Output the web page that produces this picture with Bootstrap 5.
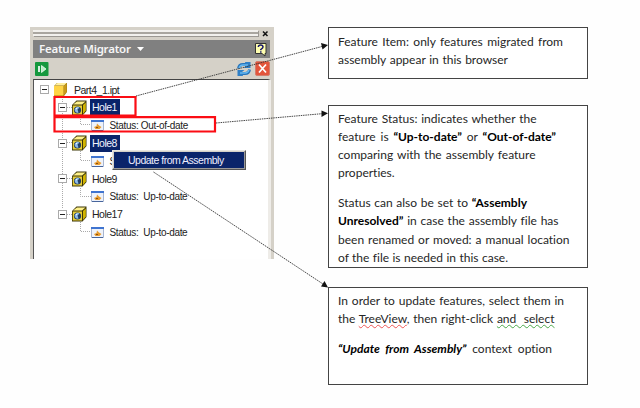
<!DOCTYPE html>
<html lang="en">
<head>
<meta charset="utf-8">
<meta name="viewport" content="width=device-width, initial-scale=1">
<title>Feature Migrator</title>
<link href="https://cdn.jsdelivr.net/npm/bootstrap@5.3.0/dist/css/bootstrap.min.css" rel="stylesheet">
<style>
body{width:640px;height:408px;background:#fefefe;font-family:"Liberation Sans",Arial,sans-serif;color:#222}
.stage{padding:27px 0 0 30px;height:408px}
.browser{width:243.5px;height:232px;background:#d5d1c8;padding:3px 4px 0 3px}
.grip{width:225px;height:6px;border-top:2px solid #f2f1ee;border-bottom:2px solid #f2f1ee;background:#a9a6a0;box-shadow:1px 1px 0 #9b9893}
.gripbar{height:10px}
.titlebar{height:18px;background:#808080;color:#f6f6f6;padding:0 3px 0 6px;font:600 11.5px/18px "Noto Sans",sans-serif;letter-spacing:-.24px}
.toolbar{height:21px;padding:0 0 0 2px}
.tree{height:180px;background:#fff;border-top:1px solid #444;border-left:1px solid #555;padding-top:1px;margin-right:-1px;border-right:3px solid #eeece8}
.tree-row{height:17.8px;font-size:10.5px;line-height:17px;white-space:pre}
.lvl0{padding-left:6px}
.lvl1{padding-left:24px}
.lvl2{padding-left:57px}
.twig{width:9px;height:9px;flex:none;border:1px solid #aaa;background:#fff;position:relative;z-index:1}
.twig::after{content:"";display:block;width:5px;height:1px;margin:3px 1px;background:#222}
.cube-gap{margin-left:5px;margin-right:3px}
.t-name{display:block;height:16.5px;padding:0 2px;letter-spacing:-.5px}
.t-file{padding-left:4px;letter-spacing:-.5px}
.t-picked{background:#0a246a;color:#f2f4ff;width:30px}
.t-stat{font-size:10px;letter-spacing:-.32px;padding-left:1.5px}
.callout{width:260px;border:1px solid #444;background:#fff;color:#262626;padding-left:9px;font-family:Lato,sans-serif;font-size:12px;line-height:18.1px;font-variant-ligatures:none}
.callout b{color:#000}
.c1{height:52px;padding-top:5px;line-height:17.7px}
.c2{height:162.5px;margin-top:26px;padding-top:4px}
.c3{height:98px;margin-top:19.5px;padding-top:4px}
.ln{display:block;white-space:nowrap;text-align-last:justify}
.gap-above{margin-top:12px}
.c1 .ln:nth-child(1){width:225px}.c1 .ln:nth-child(2){width:170px}
.c2 .ln:nth-child(1){width:198.5px}.c2 .ln:nth-child(2){width:218px}.c2 .ln:nth-child(3){width:197.5px}.c2 .ln:nth-child(4){width:57px}
.c2 .ln:nth-child(5){width:189px}.c2 .ln:nth-child(6){width:220.5px}.c2 .ln:nth-child(7){width:231.5px}.c2 .ln:nth-child(8){width:170px}
.c3 .ln:nth-child(1){width:226px}.c3 .ln:nth-child(2){width:216.5px}.c3 .ln:nth-child(3){width:214px}
.notes{margin-left:54.5px}
.spell{text-decoration:underline wavy #e55 .5px;text-underline-offset:1px}
.grammar{text-decoration:underline wavy #4aa84a .5px;text-underline-offset:1px}
.overlay{position:absolute;left:0;top:0;pointer-events:none}
.ctx{position:absolute;left:112px;top:150px;width:134px;height:20px;background:#d4d0c8;border:1px solid #e8e6e0;border-right-color:#555;border-bottom-color:#555;padding:1px;box-shadow:inset -1px -1px 0 #999;z-index:2}
.ctx-item{height:16px;background:#0a246a;color:#eef;font-size:10.5px;line-height:16px;padding-left:14px;white-space:nowrap;letter-spacing:-.5px}
.marks{z-index:3}
</style>
<script src="https://cdn.jsdelivr.net/npm/bootstrap@5.3.0/dist/js/bootstrap.bundle.min.js"></script>
</head>
<body class="position-relative overflow-hidden m-0">
<svg class="d-none">
  <symbol id="cube" viewBox="0 0 15 16">
    <path d="M0 5 4.500 .5H14.500V11L10.500 15.500H0Z" fill="#3c3606"/><path d="M1 4.500 5 1.500H13.500L10 4.500Z" fill="#fff18a"/><path d="M11 5 13.800 2.500V10.500L11 14Z" fill="#d2b500"/><path d="M.8 5.500H10V14.500H.8Z" fill="#e8cf38"/>
    <circle cx="5.500" cy="10" r="3.600" fill="#233e63"/><path d="M2.500 9.500Q4.500 5.500 7.500 7.500L5.500 9.500 6.500 12.500Q3.500 13.500 2.500 9.500Z" fill="#8dbce8"/><path d="M3.500 8.500 5.500 7.500 4.500 9.500Z" fill="#fff"/>
  </symbol>
  <symbol id="stat" viewBox="0 0 13 11">
    <path d="M.5.5H12.500V10.500H.5Z" fill="#eef2fa" stroke="#a8b6d0"/><path d="M0 0H13V2H0Z" fill="#3f74d0"/><path d="M12 2V11H1V10H12Z" fill="#47659c"/><path d="M3 7 5.500 6 6 3.500 8 5.500 10.500 7 8.500 9H4.500Z" fill="#e79b2c"/><path d="M5 7H7V8H5Z" fill="#8c4e10"/>
  </symbol>
</svg>
<main class="stage d-flex">
  <section class="browser">
    <div class="gripbar d-flex justify-content-between">
      <div class="grip"></div>
      <svg width="9" height="8" viewBox="0 0 9 8"><path d="M2 1.500 6.500 6M6.500 1.500 2 6" stroke="#111" stroke-width="1.500"/></svg>
    </div>
    <div class="titlebar d-flex align-items-center justify-content-between">
      <span>Feature Migrator <svg class="ms-1" width="8" height="5" viewBox="0 0 8 5"><path d="M0 0H7L3.500 4Z" fill="#fff"/></svg></span>
      <svg width="12" height="15" viewBox="0 0 12 15"><path d="M.5 1.500H11V11.500H10V14L7 11.500H.5Z" fill="#ffffb0" stroke="#333"/><path d="M3.300 5Q3.500 3 5.700 3T8 5Q8 6 5.800 7.500V8.300M5.800 9.300V10.800" fill="none" stroke="#16166c" stroke-width="1.500"/></svg>
    </div>
    <div class="toolbar d-flex align-items-center justify-content-between">
      <svg width="14" height="14" viewBox="0 0 14 14"><rect width="13.500" height="14" rx="1" fill="#16983d"/><path d="M4 4V10" stroke="#fff" stroke-width="1.700"/><path d="M6.500 3.500 11 7 6.500 10.500Z" fill="#b8efc3" stroke="#fff" stroke-width=".7"/></svg>
      <span class="d-flex align-items-center me-n1">
        <svg width="14" height="14" viewBox="0 0 14 14"><path d="M1.500 6.500Q2 2.500 6 2.500H9M12.500 7.500Q12 11.500 8 11.500H5" fill="none" stroke="#2875bb" stroke-width="2.900"/><path d="M8 0 13.500 0V6H6.500L9 4ZM6 14 .5 14V8H7.500L5 10Z" fill="#2f7fc6"/><path d="M2 6Q3 3 6 3H11M12 8Q11 11 8 11H3" fill="none" stroke="#65b9f2" stroke-width="1.300"/></svg>
        <svg class="ms-1" width="15" height="15" viewBox="0 0 15 15"><rect x=".5" y=".5" width="14" height="14" rx="1.500" fill="#e3553b" stroke="#d37d6c"/><path d="M4 3.500 11 11.500M11 3.500 4 11.500" stroke="#fff" stroke-width="1.700"/></svg>
      </span>
    </div>
    <div class="tree">
      <div class="tree-row lvl0 d-flex align-items-center"><i class="twig"></i><svg class="ms-1" width="17" height="15" viewBox="2 0 17 15"><path d="M3 4 6 1H16V10L13 14H3Z" fill="#a27c12"/><path d="M3.500 3.500 6.500 1H15.500L13 3.500Z" fill="#fff0a0"/><path d="M13 4 15.500 1.500V10L13 13Z" fill="#c99a18"/><path d="M3 4H12.500V13.500H3Z" fill="#ffd445"/></svg><span class="t-name t-file">Part4_1.ipt</span></div>
      <div class="tree-row lvl1 d-flex align-items-center"><i class="twig"></i><svg class="cube-gap" width="15" height="16"><use href="#cube"/></svg><span class="t-name t-picked">Hole1</span></div>
      <div class="tree-row lvl2 d-flex align-items-center"><svg class="me-1" width="13" height="11"><use href="#stat"/></svg><span class="t-name t-stat">Status: Out-of-date</span></div>
      <div class="tree-row lvl1 d-flex align-items-center"><i class="twig"></i><svg class="cube-gap" width="15" height="16"><use href="#cube"/></svg><span class="t-name t-picked">Hole8</span></div>
      <div class="tree-row lvl2 d-flex align-items-center"><svg class="me-1" width="13" height="11"><use href="#stat"/></svg><span class="t-name t-stat">S</span></div>
      <div class="tree-row lvl1 d-flex align-items-center"><i class="twig"></i><svg class="cube-gap" width="15" height="16"><use href="#cube"/></svg><span class="t-name">Hole9</span></div>
      <div class="tree-row lvl2 d-flex align-items-center"><svg class="me-1" width="13" height="11"><use href="#stat"/></svg><span class="t-name t-stat">Status:  Up-to-date</span></div>
      <div class="tree-row lvl1 d-flex align-items-center"><i class="twig"></i><svg class="cube-gap" width="15" height="16"><use href="#cube"/></svg><span class="t-name">Hole17</span></div>
      <div class="tree-row lvl2 d-flex align-items-center"><svg class="me-1" width="13" height="11"><use href="#stat"/></svg><span class="t-name t-stat">Status:  Up-to-date</span></div>
    </div>
  </section>
  <section class="notes">
    <div class="callout c1"><span class="ln">Feature Item: only features migrated from</span><span class="ln">assembly appear in this browser</span></div>
    <div class="callout c2"><span class="ln">Feature Status: indicates whether the</span><span class="ln">feature is <b>“Up-to-date”</b> or <b>“Out-of-date”</b></span><span class="ln">comparing with the assembly feature</span><span class="ln">properties.</span><span class="ln gap-above">Status can also be set to <b>“Assembly</b></span><span class="ln"><b>Unresolved”</b> in case the assembly file has</span><span class="ln">been renamed or moved: a manual location</span><span class="ln">of the file is needed in this case.</span></div>
    <div class="callout c3"><span class="ln">In order to update features, select them in</span><span class="ln">the <span class="spell">TreeView</span>, then right-click <span class="grammar">and&nbsp; select</span></span><span class="ln gap-above"><b><i>“Update from Assembly”</i></b> context option</span></div>
  </section>
</main>
<svg class="overlay" width="640" height="408" fill="none" stroke="#aaa" stroke-dasharray="1 1"><path d="M62.500 97V209M67 107.500H72M67 142.500H72M67 178.500H72M67 214.500H72M80.500 115V124.500H91M80.500 151V160.500H91M80.500 186V196.500H91M80.500 222V231.500H91"/></svg>
<div class="ctx"><div class="ctx-item">Update from Assembly</div></div>
<svg class="overlay marks" width="640" height="408" fill="none"><path d="M54.500 97H135.500V115.500H54.500ZM54.500 117.200H215V131.500H54.500Z" stroke="#fb0d14" stroke-width="2.200"/><path d="M136 96 322 46.500M216 123 322 113.700M153.500 172 323 284" stroke="#333" stroke-width=".9" stroke-dasharray="1.500 .8"/><path d="M328 45 321 43 322.500 49.500ZM328 113.300 321.500 110.500V117ZM328 287.500 324.500 281 321 286.500Z" fill="#111"/></svg>
</body>
</html>
